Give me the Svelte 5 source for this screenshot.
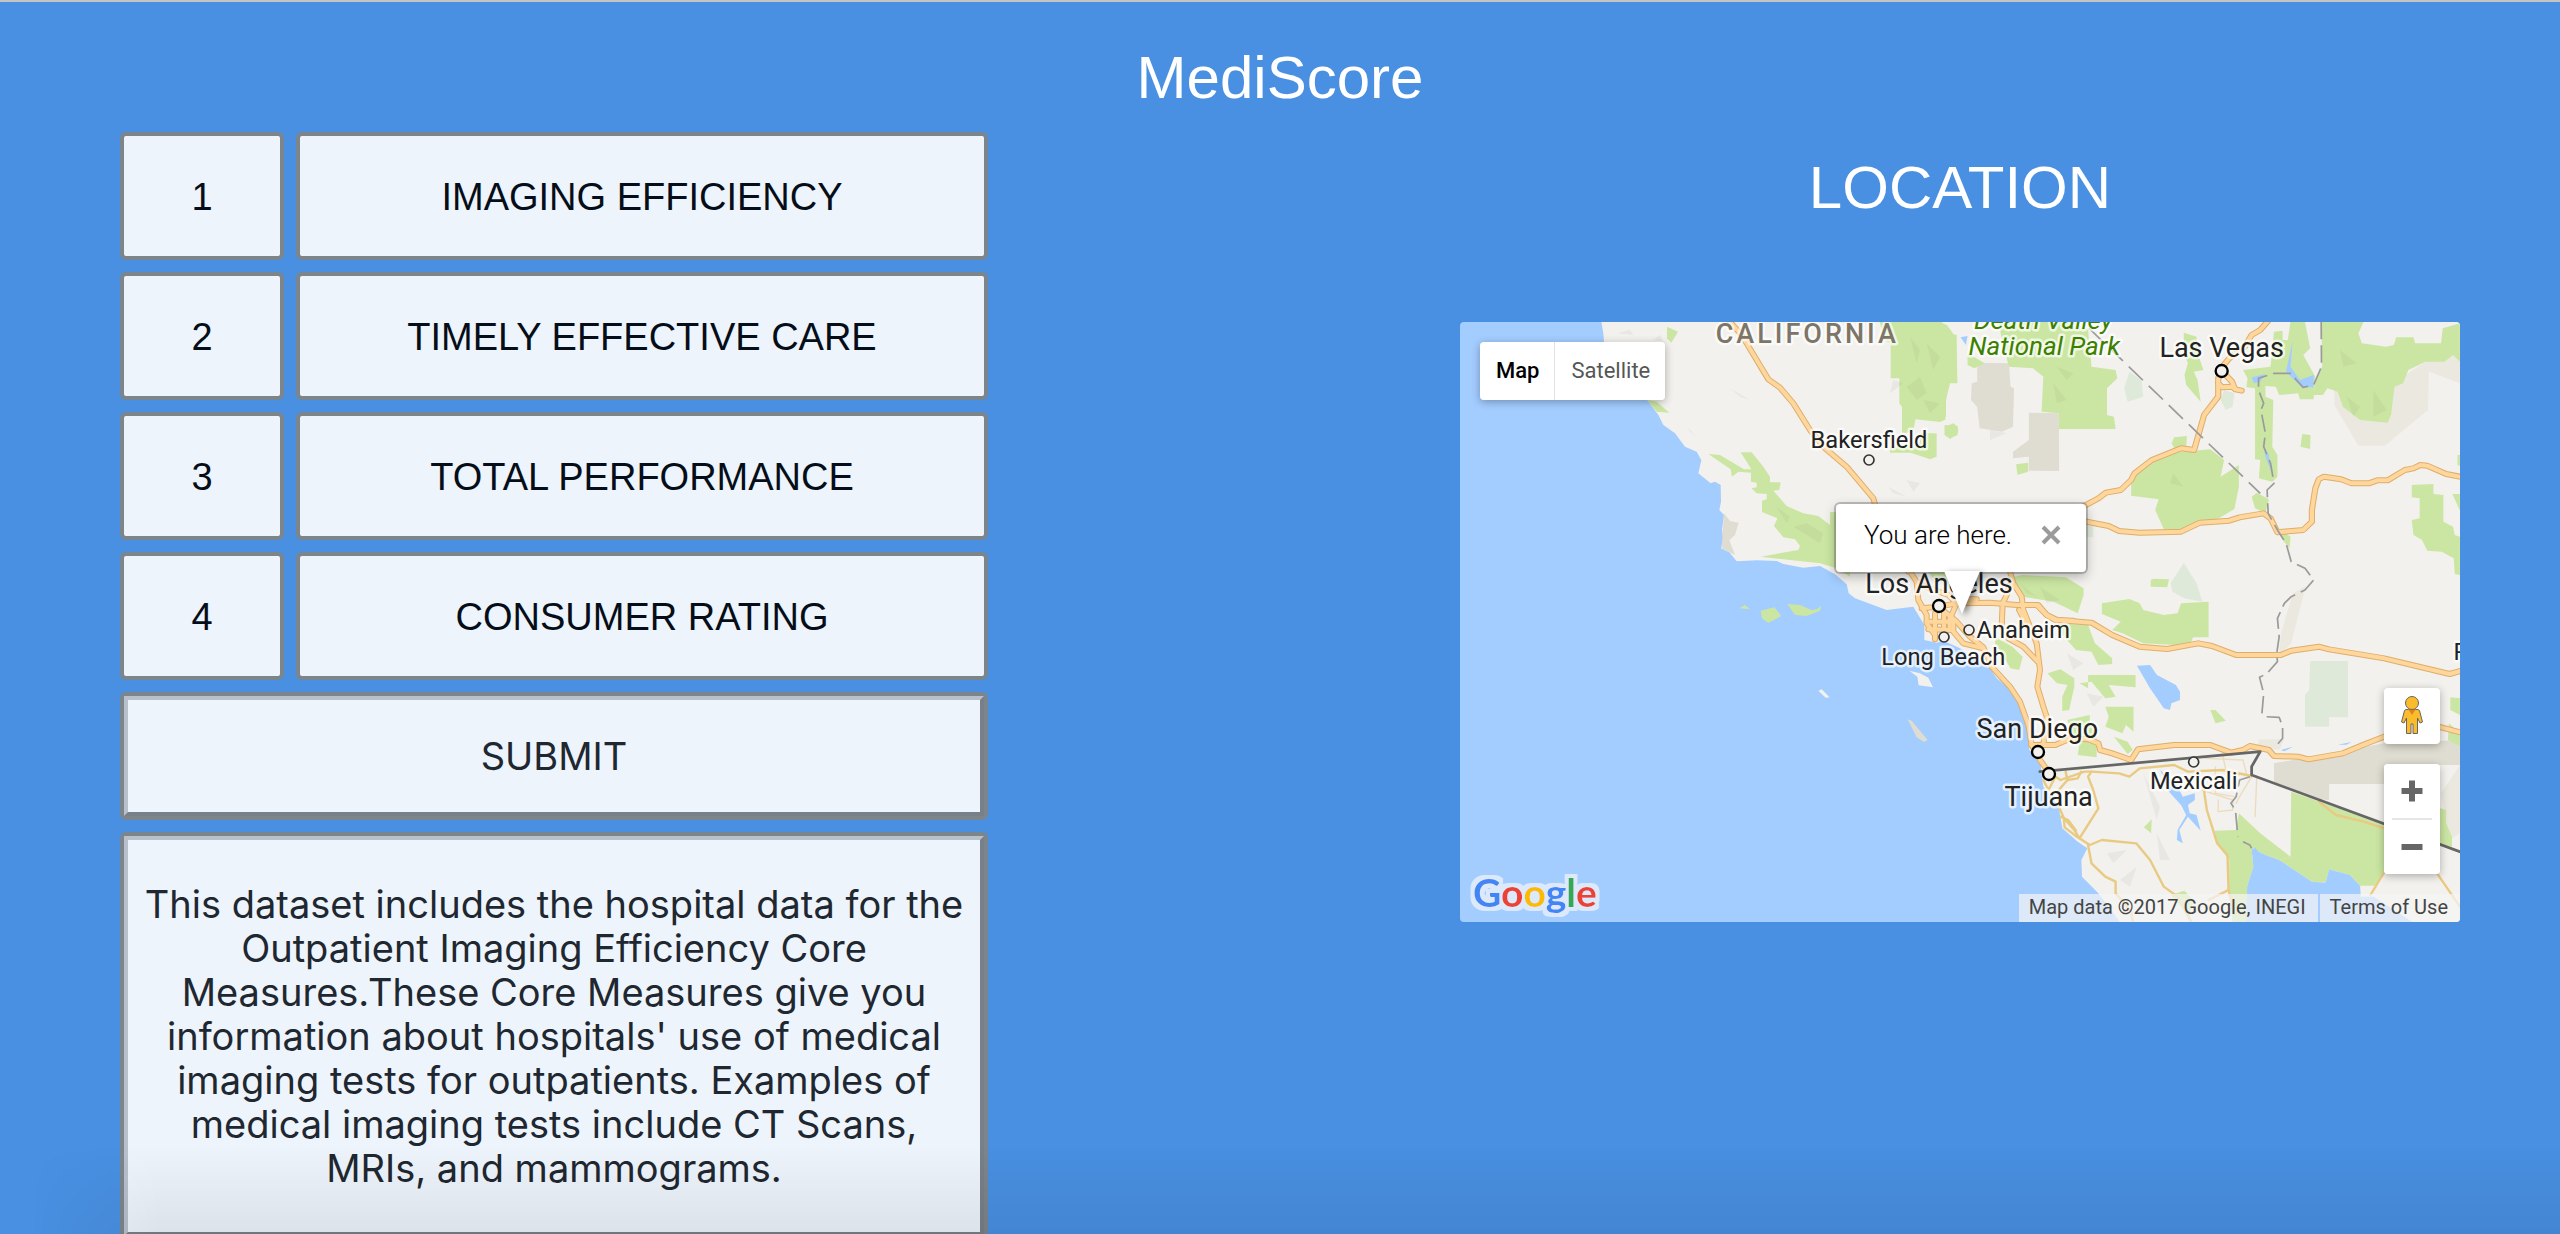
<script>
  const measures = [
    'IMAGING EFFICIENCY',
    'TIMELY EFFECTIVE CARE',
    'TOTAL PERFORMANCE',
    'CONSUMER RATING'
  ];

  let mapType = $state('Map');
  let popupOpen = $state(true);

  // Coastal half of the map
  const westParks = [
    'M681 80 714 95 694 128 681 115z',
    'M622 300 650 305 688 338 650 335z',
    'M805 462 840 465 912 508 934 508 902 457 935 457 970 500 990 530 990 547 1022 547 1018 570 1000 572 1040 618 1090 640 1135 648 1170 675 1170 636 1230 636 1230 830 1190 805 1140 790 1030 778 962 770 1075 750 1080 738 1065 718 1030 712 1002 678 1012 655 966 636 966 602 980 598 980 582 950 580 934 565 950 562 950 548 933 545 933 518 895 515 876 530 872 508z',
    'M1320 66 1505 66 1525 100 1550 105 1552 250 1530 250 1518 300 1518 350 1500 366 1426 358 1420 395 1386 400 1386 320 1378 310 1378 235 1352 235 1352 130 1330 120z',
    'M1515 380 1540 370 1553 380 1553 405 1530 415 1515 400z',
    'M1440 400 1490 400 1490 470 1470 478 1412 458 1350 458 1350 440 1440 430z',
    'M898 925 915 915 930 928z',
    'M962 932 1003 922 1024 948 985 969 966 955z',
    'M1042 912 1080 915 1115 930 1130 928 1143 918 1140 932 1100 948 1065 945z',
    'M1460 810 1520 810 1530 850 1480 835z'
  ];

  // Desert half of the map, in its own coordinate frame
  const eastParks = [
    'M0 66 20 75 45 110 50 240 20 250 15 360 0 365z',
    'M170 66 390 66 430 90 440 200 510 210 515 235 485 265 485 345 505 350 510 387 345 387 345 340 295 335 300 230 270 205 200 200 180 120z',
    'M80 160 130 190 100 205 80 195z',
    'M13 375 50 378 53 395 30 417 13 405z',
    'M221 493 256 488 256 515 225 525z',
    'M708 98 745 110 750 165 765 210 737 215 748 240 757 305 715 255 710 225 720 190 708 160z',
    'M555 545 600 490 690 455 740 452 785 448 825 480 815 530 868 495 868 560 855 627 810 655 750 670 715 690 650 688 625 630 635 598 555 587z',
    'M673 430 680 412 717 408 715 440 680 445z',
    'M880 210 960 200 970 95 995 92 995 120 1010 120 1018 66 1060 66 1075 145 1055 165 1090 230 1085 298 1045 298 1040 280 985 285 975 260 945 258 945 290 968 300 965 440 980 465 980 530 965 545 926 535 930 480 915 478 915 265 890 262 893 235z',
    'M1108 66 1230 66 1215 100 1225 130 1295 140 1318 135 1325 112 1375 112 1380 130 1455 130 1460 85 1510 70 1510 185 1490 165 1465 185 1410 185 1360 210 1345 250 1320 260 1310 345 1300 368 1220 360 1170 320 1155 275 1125 265 1112 285 1085 285 1090 240 1110 200z',
    'M1052 402 1076 405 1075 447 1047 440z',
    'M1370 555 1433 552 1433 582 1462 585 1462 665 1490 680 1495 705 1510 710 1510 825 1495 822 1492 775 1457 755 1415 752 1400 720 1375 705 1370 660 1393 655 1393 595 1370 592z',
    'M1488 582 1510 582 1510 632z',
    'M1503 465 1510 465 1510 498 1503 495z',
    'M905 590 920 578 955 598 945 640 915 625z',
    'M975 680 1018 710 1015 745 995 720z',
    'M215 830 240 825 365 832 417 865 417 885 400 940 330 905 240 890 215 850z',
    'M470 910 550 897 580 910 590 930 650 945 690 940 700 910 780 905 780 1012 735 1012 725 1037 590 1030 530 1000 500 990 525 965 470 942z',
    'M612 840 620 836 665 838 660 862 612 860z',
    'M312 1120 350 1108 390 1135 390 1160 375 1230 355 1233 355 1190 370 1155 340 1150z',
    'M405 1150 430 1165 430 1125 568 1125 568 1162 490 1155 510 1190 480 1195 440 1145z',
    'M480 1220 562 1220 562 1295 540 1275 530 1300 480 1280 490 1250z',
    'M370 1260 435 1245 435 1275 455 1300 455 1372 400 1365 405 1330 380 1300z',
    'M785 1230 800 1230 830 1262 800 1270z',
    'M592 1582 615 1558 613 1600z',
    'M160 1010 210 1040 240 1070 230 1110 205 1105 160 1030z',
    'M340 970 430 975 450 1030 500 1075 500 1092 460 1095 440 1055 395 1050 360 1010z',
    'M505 1310 545 1325 560 1350 545 1362z',
    'M1020 1475 1290 1572 1290 1720 1262 1757 1220 1757 1190 1725 1130 1708 1120 1748 1080 1745 985 1680 1018 1670z',
    'M868 1540 930 1600 1018 1670 985 1680 945 1665 905 1645 910 1700 892 1760 890 1866 850 1866 840 1780 840 1680 805 1635 798 1592 860 1590z',
    'M1482 1192 1510 1195 1510 1245 1482 1230z',
    'M1478 1270 1510 1300 1510 1338 1475 1320z',
    'M1440 1520 1470 1530 1470 1570 1487 1610 1487 1640 1440 1630z',
    'M670 1785 710 1772 735 1800 725 1850z'
  ];

  const eastDesert = [
    'M108 188 200 190 205 260 215 265 212 380 180 395 115 385 108 320 90 300 92 250 108 245z',
    'M258 338 345 340 346 513 258 512 258 470 212 475 212 455 258 420z',
    'M970 1390 1290 1330 1510 1320 1510 1395 1440 1395 1440 1452 1130 1452 1130 1500 1080 1497 970 1445z'
  ];

  const eastPlateau = [
    'M1145 270 1145 315 1215 437 1292 437 1417 330 1420 215 1510 250 1510 160 1440 165 1300 260z',
    'M1025 880 1062 858 1020 1030 985 1065 990 1000z',
    'M925 1318 1000 1318 985 1350 925 1345z',
    'M1455 1480 1510 1395 1510 1600 1480 1620z'
  ];

  const paleParks = [
    'M708 788 745 850 762 905 710 895 675 875 670 850z',
    'M550 215 585 240 590 290 545 305 535 265z',
    'M815 300 825 270 855 280 850 320 830 330z',
    'M425 675 445 680 445 712 425 712z',
    'M1075 1083 1185 1083 1185 1252 1130 1252 1130 1280 1060 1280 1060 1185 1072 1170z'
  ];

  const eastWater = [
    'M572 1097 610 1095 630 1125 685 1155 697 1175 697 1200 672 1210 668 1230 650 1225 610 1165z',
    'M640 1410 690 1460 705 1490 740 1480 740 1500 720 1515 725 1540 745 1545 757 1592 720 1550 695 1590 705 1630 688 1620 690 1590 715 1545 700 1515 665 1475z',
    'M905 1645 945 1665 985 1680 1080 1745 1120 1748 1130 1708 1190 1725 1220 1757 1222 1790 1260 1790 1372 1866 890 1866 892 1760 910 1700z',
    'M905 232 945 222 930 245 912 250z',
    'M1024 125 1018 200 1045 240 1085 225 1085 262 1050 262 1005 215 1015 165z',
    'M60 112 80 108 75 135z',
    'M940 440 955 465 962 515 945 470z',
    'M990 1350 1025 1340 1000 1354z',
    'M1155 1334 1195 1326 1180 1334z',
    'M915 1642 930 1665 945 1675 940 1685 920 1678 905 1660z'
  ];

  const westRoads = ['M865 60 905 105 985 238 1020 263 1060 310 1110 390 1155 445 1220 500 1300 595 1312 640 1405 815'];

  // Freeways around Los Angeles
  const metroRoads = [
    'M300 35 320 65 345 80 415 105 440 130',
    'M320 65 325 120 350 165 350 190 375 225',
    'M335 145 385 140 440 130 540 128 620 135 680 135 710 165 735 180 790 182',
    'M385 140 440 185 480 230 520 262 545 320 600 380 630 425 655 495 665 555 690 600 715 635',
    'M375 160 375 238',
    'M402 155 402 235',
    'M350 185 430 185 430 215 460 250 520 265',
    'M355 208 425 210',
    'M440 130 418 180 420 210',
    'M578 130 575 200',
    'M600 35 610 70 635 110 640 150 652 180 680 250 690 330 682 380 700 440 710 470 700 555',
    'M600 75 590 105 578 130',
    'M595 235 640 260 683 305',
    'M440 118 500 118'
  ];

  const eastRoads = [
    'M955 60 930 90 905 105 885 140 840 175 820 200 808 235 808 290 767 345 738 450 700 445 615 480 565 520 555 540 525 570 482 578 460 595 415 620',
    'M808 250 820 262 848 260 858 268 876 272',
    'M820 215 848 245 856 265',
    'M415 663 490 678 520 693 580 698 700 695 755 668 840 662 870 652 940 640 960 655 980 697 1055 690 1080 665 1080 630 1090 565 1100 538 1115 530 1165 538 1195 550 1245 550 1270 541 1300 541 1350 510 1375 505 1395 495 1415 497 1470 522 1515 531',
    'M245 915 285 915 310 945 340 960 440 968 500 1005 580 1040 660 1047 750 1030 790 1038 860 1065 990 1065 1020 1052 1100 1040 1130 1048 1290 1075 1480 1122 1515 1112',
    'M265 1335 335 1335 380 1315 430 1318 460 1330 465 1350 500 1360 555 1380 575 1348 680 1335 785 1335 845 1358 880 1350 900 1338 955 1350 970 1368 1040 1370 1070 1378 1170 1360 1240 1330 1290 1310 1440 1278 1515 1298',
    'M230 930 240 950 250 975'
  ];

  const minorRoads = [
    'M320 1420 350 1440 420 1415 440 1415 520 1420 550 1430 580 1405 680 1395 720 1415 820 1410 905 1428',
    'M300 1440 315 1470 335 1430',
    'M365 1415 370 1440 400 1435 410 1415',
    'M370 1440 345 1470 345 1520 360 1555 390 1590 405 1615 435 1635 470 1620 570 1630 610 1680 650 1760 690 1790 730 1866',
    'M350 1550 372 1560 395 1592',
    'M360 1560 362 1582 400 1612',
    'M430 1635 440 1690 480 1730 510 1745 510 1780 555 1835 560 1866',
    'M405 1615 460 1525 445 1470 430 1430 440 1415',
    'M765 1460 775 1530 805 1630 835 1665 838 1770 850 1820',
    'M838 1770 780 1800',
    'M1100 1505 1150 1545 1230 1565 1290 1585',
    'M1300 1700 1250 1785',
    'M1440 1715 1510 1820'
  ];

  const streets = [
    'M770 1375 880 1380 890 1420',
    'M800 1400 800 1480 855 1490',
    'M760 1470 850 1500 850 1530 808 1535 808 1500',
    'M905 1430 870 1490 860 1510',
    'M920 1430 915 1550',
    'M820 1360 830 1410 870 1425'
  ];

  const cities = [
    { name: 'Las Vegas', x: 2345, y: 172, cx: 2345, cy: 213, major: true },
    { name: 'Bakersfield', x: 1287, y: 444, cx: 1287, cy: 480 },
    { name: 'Los Angeles', x: 1497, y: 880, cx: 1497, cy: 918, major: true },
    { name: 'Anaheim', x: 1750, y: 1015, cx: 1587, cy: 990 },
    { name: 'Long Beach', x: 1510, y: 1096, cx: 1512, cy: 1011 },
    { name: 'San Diego', x: 1792, y: 1315, cx: 1794, cy: 1356, major: true },
    { name: 'Tijuana', x: 1826, y: 1517, cx: 1827, cy: 1422, major: true },
    { name: 'Mexicali', x: 2261, y: 1468, cx: 2261, cy: 1386 }
  ];
</script>

<main class="page">
  <header class="masthead"><h1>MediScore</h1></header>

  <div class="columns">
    <section class="ranking" aria-label="Measures">
      <ol class="measures">
        {#each measures as measure, i}
          <li>
            <span class="box rank">{i + 1}</span>
            <button class="box measure" type="button">{measure}</button>
          </li>
        {/each}
      </ol>
      <div class="frame">
        <button class="panel submit" type="button">SUBMIT</button>
      </div>
      <div class="frame">
        <p class="panel description">
          This dataset includes the hospital data for the Outpatient Imaging Efficiency Core
          Measures.These Core Measures give you information about hospitals' use of medical imaging
          tests for outpatients. Examples of medical imaging tests include CT Scans, MRIs, and
          mammograms.
        </p>
      </div>
    </section>

    <section class="location">
      <h2>LOCATION</h2>
      <div class="map">
        <svg class="canvas" viewBox="60 66 3000 1800" preserveAspectRatio="xMidYMid slice" role="img" aria-label="Map of Southern California">
          <path class="land" d="M483 60 490 100 492 125 540 220 622 300 655 345 670 375 705 400 735 440 770 455 784 480 775 520 812 550 825 545 842 555 843 605 838 630 852 645 846 690 850 715 843 745 868 757 890 784 950 781 1010 783 1030 792 1090 803 1140 798 1185 823 1220 853 1226 880 1245 895 1340 930 1420 920 1453 975 1453 1020 1490 1028 1510 1022 1560 1045 1650 1105 1670 1135 1720 1175 1750 1230 1765 1320 1768 1350 1800 1380 1805 1420 1810 1460 1856 1520 1867 1585 1913 1625 1942 1645 1924 1680 1926 1730 1975 1780 2040 1866 3060 1866 3060 60z" />
          <path class="land" d="M1135 1172 1145 1168 1169 1192 1157 1193zM1408 1112 1440 1120 1465 1133 1479 1162 1436 1156 1432 1130z" />
          <path class="desert" d="M1403 1258 1415 1262 1463 1320 1452 1326 1430 1312zM852 640 870 663 896 668 885 705 868 720 885 765 845 745z" />
          {#each westParks as d}<path class="park" {d} />{/each}

          <g transform="translate(1500 0) scale(1.033 1)">
            {#each eastPlateau as d}<path class="plateau" {d} />{/each}
            {#each eastDesert as d}<path class="desert" {d} />{/each}
            {#each paleParks as d}<path class="pale" {d} />{/each}
            {#each eastParks as d}<path class="park" {d} />{/each}
            {#each eastWater as d}<path class="water" {d} />{/each}
            {#each streets as d}<path class="street" {d} />{/each}
            {#each minorRoads as d}<path class="minor" {d} />{/each}
          </g>

          <!-- hillshade -->
          <path class="relief" d="M1410 110 1440 150 1430 190zM1460 130 1500 170 1480 210zM1400 260 1440 230 1460 280 1430 300zM1450 300 1500 310 1470 340zM1060 680 1100 670 1150 700 1140 730zM1010 620 1050 650 1040 670zM1360 240 1390 250 1350 280zM530 100 570 90 580 105zM870 265 930 300 900 290zM640 120 660 105 670 125zM740 380 770 410 750 395zM1400 540 1440 550 1420 575zM1345 560 1400 590 1360 580z" />
          <path class="relief" d="M1840 250 1880 300 1850 310zM1850 200 1900 220 1880 240zM1740 850 1790 890 1760 880zM1800 860 1860 900 1820 910zM2720 290 2760 320 2740 350zM2800 270 2840 330 2800 350zM2200 520 2230 560 2190 550zM1880 1060 1930 1090 1900 1110zM1940 1180 1990 1190 1960 1220zM2110 1420 2160 1520 2150 1560zM2150 1600 2190 1680 2160 1680zM2000 1660 2060 1650 2020 1690zM2040 1740 2090 1700 2070 1760zM2700 150 2750 190 2710 200zM1650 390 1700 400 1650 420z" />

          {#each ['road-edge', 'road'] as layer}
            <g class={layer}>
              {#each westRoads as d}<path {d} />{/each}
              <g transform="translate(1110 780)">
                {#each metroRoads as d}<path {d} />{/each}
              </g>
              <g transform="translate(1500 0) scale(1.033 1)">
                {#each eastRoads as d}<path {d} />{/each}
              </g>
            </g>
          {/each}

          <g transform="translate(1500 0) scale(1.033 1)">
            <path class="state" d="M432 84 930 580" />
            <path class="state fine" d="M1107 66 1108 200 1085 255 1055 262 1035 240 1020 220 970 220 925 235 925 270 940 310 932 330 945 400 940 440 960 490 970 550 950 570 953 640 980 690 1005 730 1020 785 1060 805 1085 840 1060 870 1020 890 1000 910 980 955 985 1010 978 1060 980 1085 950 1120 928 1132 940 1180 935 1240 945 1250 985 1252 995 1280 995 1315 978 1335" />
            <path class="state fine" d="M900 1430 870 1440 860 1490 845 1510 858 1530 865 1610M880 1625 900 1635 905 1645" />
            <path class="border" d="M290 1415 930 1355 905 1400 905 1425 1515 1657" />
          </g>

          <text class="region" x="1102" y="128">CALIFORNIA</text>
          <text class="reserve" x="1810" y="87">Death Valley</text>
          <text class="reserve" x="1813" y="164">National Park</text>
          <text class="city" x="3103" y="1080">Pho</text>
          {#each cities as city}
            <circle class={['dot', city.major && 'major']} cx={city.cx} cy={city.cy} r={city.major ? 18 : 15} />
            <text class={['city', city.major && 'major']} x={city.x} y={city.y}>{city.name}</text>
          {/each}
        </svg>

        {#if popupOpen}
          <div class="popup">
            <span>You are here.</span>
            <button class="close" type="button" aria-label="Close" onclick={() => (popupOpen = false)}>
              <svg width="20" height="20" viewBox="0 0 20 20"><path d="M2 2 18 18M18 2 2 18" /></svg>
            </button>
            <svg class="tail" width="36" height="44" viewBox="0 0 36 44"><path d="M0 0H36L18 43z" /></svg>
          </div>
        {/if}

        <div class="types">
          {#each ['Map', 'Satellite'] as type}
            <button class={{ active: mapType === type }} type="button" onclick={() => (mapType = type)}>{type}</button>
          {/each}
        </div>

        <div class="controls">
          <button class="pegman" type="button" aria-label="Street View">
            <svg width="24" height="40" viewBox="0 0 24 40">
              <path class="body" d="M6 14.500h12l1.500 1L22.500 27l-2.500 1-2.500-5V38.500h-4.500V29h-2v9.500H6.500V23L4 28l-2.500-1 3-11.500z" />
              <path class="collar" d="M8 14h8l-4 6z" />
              <circle class="body" cx="12" cy="8" r="6.500" />
            </svg>
          </button>
          <div class="zoom">
            <button type="button" aria-label="Zoom in"><svg width="22" height="22" viewBox="0 0 22 22"><path d="M11 0.500V21.500M0.500 11H21.500" /></svg></button>
            <hr />
            <button type="button" aria-label="Zoom out"><svg width="22" height="22" viewBox="0 0 22 22"><path d="M0.500 11H21.500" /></svg></button>
          </div>
        </div>

        <svg class="brand" width="136" height="56" viewBox="0 0 136 56" role="img" aria-label="Google">
          <filter id="halo" x="-10%" y="-20%" width="120%" height="140%">
            <feMorphology in="SourceAlpha" operator="dilate" radius="4" result="grown" />
            <feFlood flood-color="#dce9fb" />
            <feComposite in2="grown" operator="in" result="rim" />
            <feMerge>
              <feMergeNode in="rim" />
              <feMergeNode in="SourceGraphic" />
            </feMerge>
          </filter>
          <text filter="url(#halo)" x="5" y="41"><tspan fill="#4285f4">G</tspan><tspan fill="#ea4335">o</tspan><tspan fill="#fbbc05">o</tspan><tspan fill="#4285f4">g</tspan><tspan fill="#34a853">l</tspan><tspan fill="#ea4335">e</tspan></text>
        </svg>

        <div class="credits">
          <span>Map data ©2017 Google, INEGI</span>
          <a href="#terms">Terms of Use</a>
        </div>
      </div>
    </section>
  </div>
  <div class="shade"></div>
</main>

<style>
  :global(body) {
    margin: 0;
    background: #4990e2;
  }
  * {
    box-sizing: border-box;
  }
  button {
    margin: 0;
    padding: 0;
    border: 0;
    background: #fff;
    font: inherit;
    color: inherit;
    cursor: pointer;
  }
  .page {
    position: relative;
    height: 100vh;
    overflow: hidden;
    border-top: 2px solid #c4c4c4;
    background: #4990e2;
    font-family: 'Liberation Sans', Arial, sans-serif;
  }
  .masthead {
    height: 130px;
    padding-top: 42px;
  }
  h1,
  h2 {
    margin: 0;
    color: #fff;
    font-size: 60px;
    font-weight: 400;
    line-height: 68px;
    text-align: center;
  }
  .columns {
    display: grid;
    grid-template-columns: 868fr 472fr 1000fr;
    align-items: start;
    padding: 0 100px 0 120px;
  }
  .ranking,
  .measures {
    display: flex;
    flex-direction: column;
    gap: 12px;
  }
  .measures {
    margin: 0;
    padding: 0;
    list-style: none;
  }
  .measures li {
    display: grid;
    grid-template-columns: 164fr 692fr;
    gap: 12px;
    height: 128px;
  }
  .box {
    display: flex;
    align-items: center;
    justify-content: center;
    padding-top: 2px;
    border: 4px solid #7d858c;
    border-radius: 6px;
    background: #edf4fc;
    color: #050e18;
    font-size: 38px;
  }
  .frame {
    border: 4px solid #7d858c;
    border-radius: 6px;
  }
  .panel {
    display: block;
    width: 100%;
    margin: 0;
    border: 4px solid;
    border-color: #b7c0cb #777f89 #777f89 #b7c0cb;
    background: #edf4fc;
    color: #1f2730;
    font-family: Inter, sans-serif;
    font-size: 38px;
    line-height: 44px;
    text-align: center;
  }
  .submit {
    height: 120px;
  }
  .description {
    padding: 42px 10px;
  }
  .location {
    grid-column: 3;
  }
  h2 {
    padding: 22px 0 100px;
  }
  .map {
    position: relative;
    height: 600px;
    overflow: hidden;
    border-radius: 4px;
    background: #a3ccff;
    font-family: Roboto, sans-serif;
  }
  .canvas {
    display: block;
    width: 100%;
    height: 100%;
  }
  .land {
    fill: #f2f1ed;
  }
  .park {
    fill: #cbe6a3;
  }
  .pale {
    fill: #dfe9da;
  }
  .desert {
    fill: #dfdcd1;
  }
  .plateau {
    fill: #ebe8df;
  }
  .water {
    fill: #a3ccff;
  }
  .relief {
    fill: #50503c;
    opacity: 0.06;
  }
  .road-edge,
  .road,
  .minor,
  .street,
  .state,
  .border {
    fill: none;
    stroke-linejoin: round;
    stroke-linecap: round;
  }
  .road-edge {
    stroke: #deae6c;
    stroke-width: 18px;
  }
  .road {
    stroke: #ffd69b;
    stroke-width: 12px;
  }
  .minor {
    stroke: #e9ca82;
    stroke-width: 7px;
  }
  .street {
    stroke: #ebdcc0;
    stroke-width: 4px;
  }
  .state {
    stroke: #9b9b9b;
    stroke-width: 5px;
    stroke-linecap: butt;
    stroke-dasharray: 58px 24px;
  }
  .state.fine {
    stroke-dasharray: 52px 18px;
  }
  .border {
    stroke: #666;
    stroke-width: 8px;
  }
  .dot {
    fill: #f2f1ed;
    stroke: #333;
    stroke-width: 5px;
  }
  .dot.major {
    stroke: #000;
    stroke-width: 7px;
  }
  .canvas text {
    text-anchor: middle;
    paint-order: stroke;
    stroke: rgba(255, 255, 255, 0.7);
    stroke-width: 15px;
    stroke-linejoin: round;
  }
  .city {
    fill: #222;
    font-size: 71px;
  }
  .city.major {
    font-size: 81px;
  }
  .region {
    fill: #7d7567;
    font-size: 81px;
    font-weight: 500;
    letter-spacing: 9px;
  }
  .reserve {
    fill: #3d8000;
    font-size: 78px;
    font-style: italic;
  }
  .popup {
    position: absolute;
    top: 182px;
    left: calc(50% - 124px);
    display: flex;
    align-items: center;
    justify-content: space-between;
    width: 250px;
    height: 68px;
    padding: 0 25px 6px 28px;
    border-radius: 4px;
    background: #fff;
    box-shadow: 0 0 0 2px rgba(90, 90, 90, 0.35), 0 4px 12px rgba(0, 0, 0, 0.3);
    color: #000;
    font-size: 26px;
    font-weight: 300;
  }
  .close {
    display: flex;
  }
  .close path {
    fill: none;
    stroke: #9b9b9b;
    stroke-width: 4px;
  }
  .tail {
    position: absolute;
    top: 67px;
    left: 108px;
    filter: drop-shadow(3px 2px 3px rgba(0, 0, 0, 0.5));
  }
  .tail path {
    fill: #fff;
  }
  .types {
    position: absolute;
    top: 20px;
    left: 20px;
    display: flex;
    height: 58px;
    border-radius: 4px;
    box-shadow: 0 2px 8px rgba(0, 0, 0, 0.3);
    overflow: hidden;
  }
  .types button {
    padding: 0 15px 2px 16px;
    color: #565656;
    font-size: 22px;
  }
  .types .active {
    color: #000;
    font-weight: 500;
  }
  .types button + button {
    border-left: 1px solid #e2e2e2;
  }
  .controls {
    position: absolute;
    right: 20px;
    bottom: 48px;
    display: grid;
    gap: 20px;
    width: 56px;
  }
  .pegman,
  .zoom {
    border-radius: 4px;
    background: #fff;
    box-shadow: 0 2px 8px rgba(0, 0, 0, 0.3);
  }
  .pegman {
    display: flex;
    align-items: center;
    justify-content: center;
    height: 56px;
    padding-bottom: 2px;
  }
  .body {
    fill: #fbbc2c;
    stroke: #666;
    stroke-width: 1px;
  }
  .collar {
    fill: #e08322;
  }
  .zoom button {
    display: flex;
    align-items: center;
    justify-content: center;
    width: 100%;
    height: 54px;
    border-radius: 4px;
  }
  .zoom path {
    stroke: #666;
    stroke-width: 6px;
  }
  .zoom hr {
    height: 2px;
    margin: 0 8px;
    border: 0;
    background: #e6e6e6;
  }
  .brand {
    position: absolute;
    bottom: 0;
    left: 8px;
    font-family: Lato, sans-serif;
    font-size: 39px;
    font-weight: 700;
  }
  .credits {
    position: absolute;
    right: 0;
    bottom: 0;
    display: flex;
    gap: 2px;
    color: #444;
    font-size: 20px;
    line-height: 26px;
  }
  .credits > * {
    padding: 0 12px 2px 10px;
    background: rgba(245, 245, 245, 0.7);
    color: inherit;
    text-decoration: none;
  }
  .shade {
    position: absolute;
    right: 0;
    bottom: 0;
    left: 0;
    height: 90px;
    background: linear-gradient(transparent, rgba(0, 0, 0, 0.07));
    mask-image: linear-gradient(to right, transparent 30px, #000 160px);
    pointer-events: none;
  }
</style>
